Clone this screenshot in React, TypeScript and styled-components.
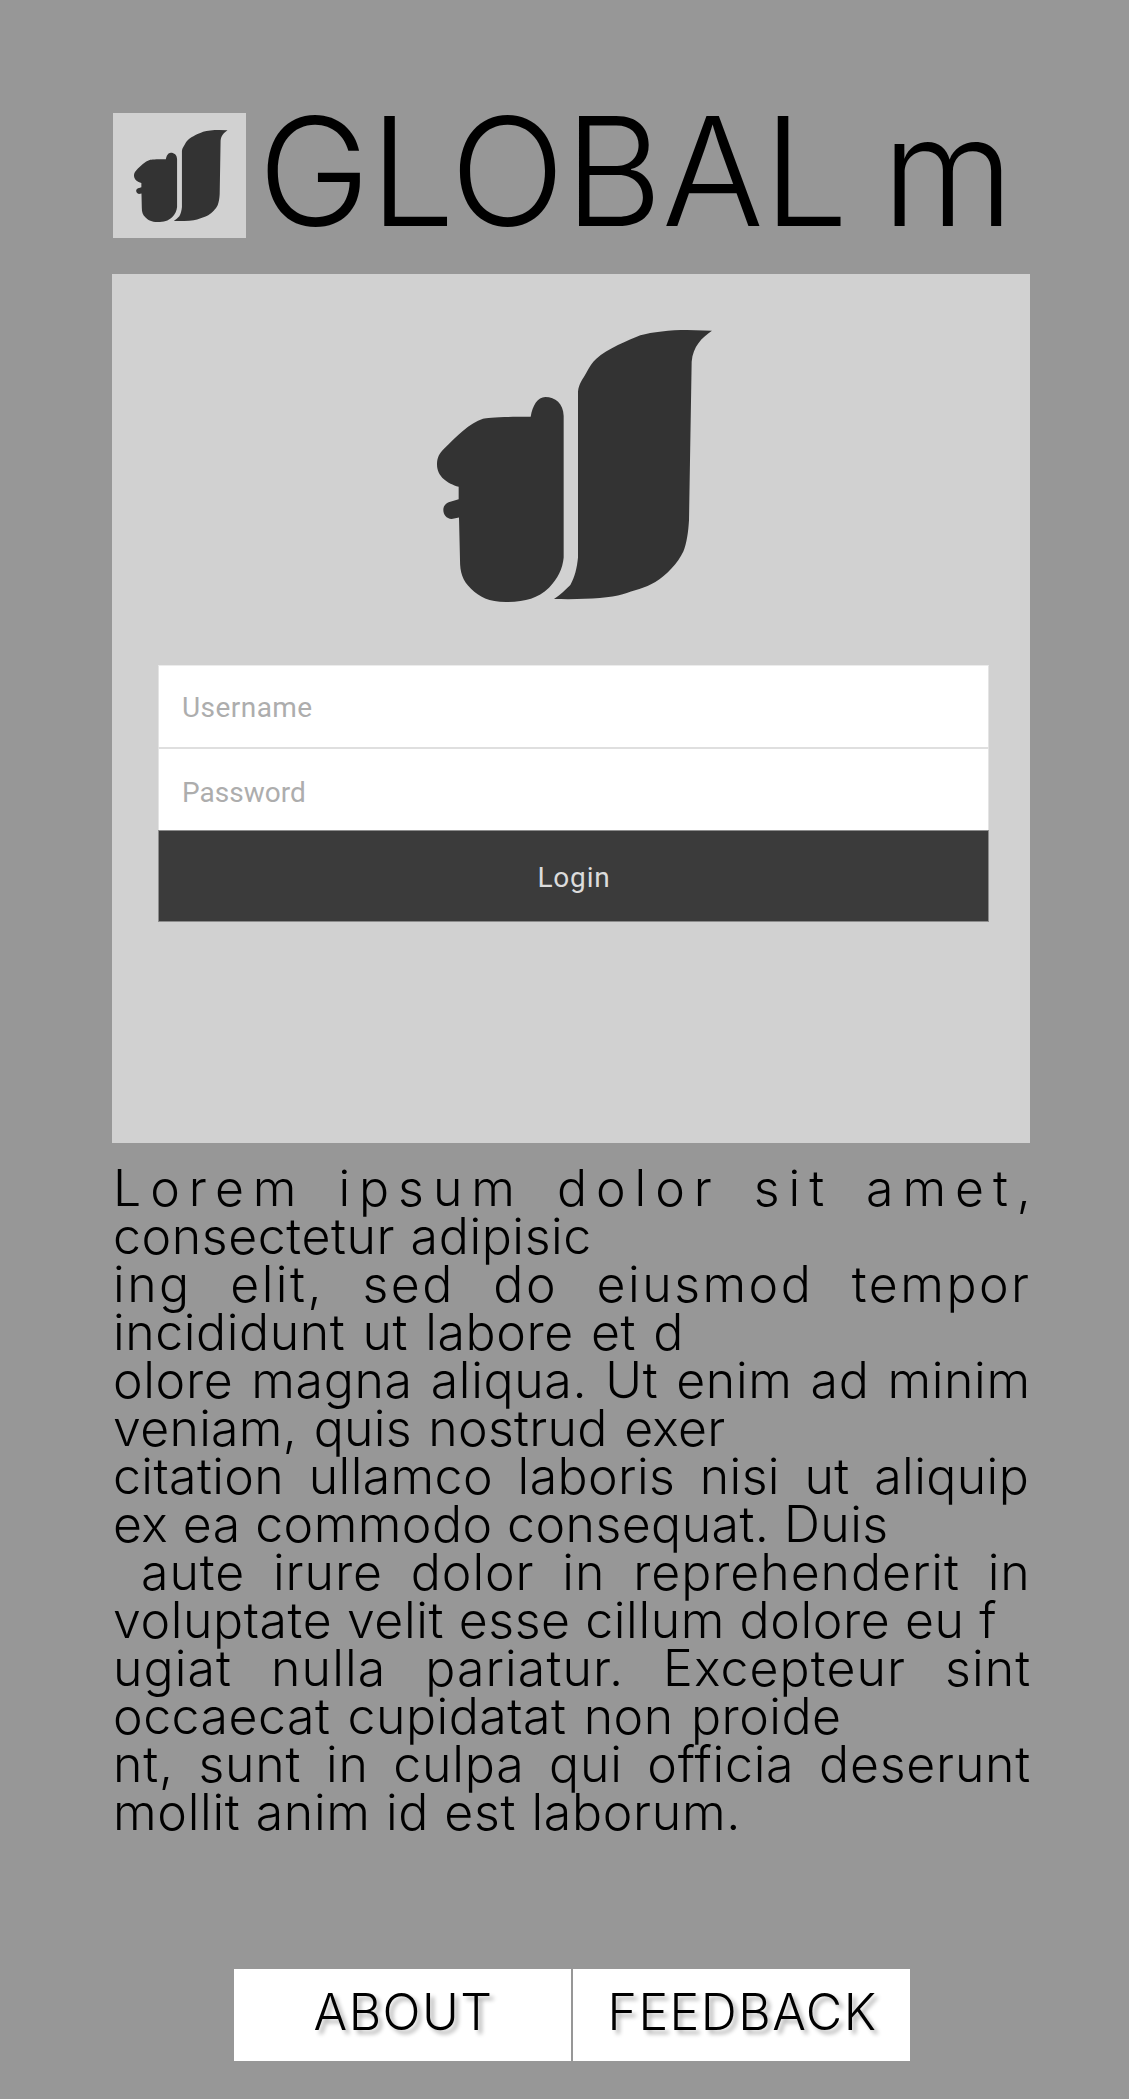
import React from 'react';
import styled, { createGlobalStyle } from 'styled-components';

const Global = createGlobalStyle`
  * { box-sizing: border-box; }
  body { margin: 0; background: #979797; }
`;

const Page = styled.main`
  width: 1129px;
  height: 2099px;
  padding: 113px 99px 0 112px;
  overflow: hidden;
  background: #979797;
  color: #000;
  font-family: Inter, "Liberation Sans", sans-serif;
  font-weight: 300;
`;

const Header = styled.header`
  display: flex;
  align-items: flex-start;
  height: 125px;
  padding-left: 1px;
`;

const LogoTile = styled.div`
  flex: none;
  width: 133px;
  height: 125px;
  padding: 17px 0 0 21px;
  background: #d1d1d1;
`;

const Mark = styled.svg<{ $width: number; $height: number }>`
  display: block;
  width: ${(p) => p.$width}px;
  height: ${(p) => p.$height}px;
  fill: #333;
`;

const Title = styled.h1`
  margin: 0 0 0 12px;
  font-size: 151px;
  font-weight: 300;
  line-height: 117px;
  letter-spacing: -0.45px;
  word-spacing: -8px;
  white-space: nowrap;
`;

const Card = styled.section`
  width: 918px;
  height: 869px;
  margin-top: 36px;
  padding: 56px 41px 0 46px;
  background: #d1d1d1;
`;

const CardMark = styled.div`
  height: 335px;
  padding-left: 278.5px;
`;

const Form = styled.div`
  display: flex;
  flex-direction: column;
  font-family: Roboto, "Liberation Sans", sans-serif;
  font-size: 28px;
  font-weight: 400;
`;

const Field = styled.div<{ $top: string; $spacing: number; $drop: number }>`
  height: ${(p) => (p.$top === '#ececec' ? 82 : 83)}px;
  padding: ${(p) => p.$drop}px 0 0 23px;
  border: solid #e4e4e4;
  border-width: 0 1px;
  border-top: ${(p) => (p.$top === '#ececec' ? 1 : 2)}px solid ${(p) => p.$top};
  background: #fff;
  color: #adadad;
  line-height: 81px;
  letter-spacing: ${(p) => p.$spacing}px;
`;

const LoginButton = styled.div`
  height: 92px;
  padding: 2px 0 0 1px;
  border: 1px solid #8c8c8c;
  background: #3b3b3b;
  color: #dcdcdc;
  line-height: 90px;
  letter-spacing: 0.8px;
  text-align: center;
`;

const Copy = styled.article`
  margin-top: 21px;
  padding-left: 1px;
  font-size: 50px;
  line-height: 48px;
`;

const Line = styled.div<{ $letter: number; $word: number; $indent?: number }>`
  height: 48px;
  padding-left: ${(p) => p.$indent ?? 0}px;
  letter-spacing: ${(p) => p.$letter}px;
  word-spacing: ${(p) => p.$word}px;
  white-space: nowrap;
`;

const Nav = styled.nav`
  display: flex;
  gap: 2px;
  margin: 133px 0 0 122px;
`;

const NavButton = styled.div`
  width: 337px;
  height: 92px;
  padding-left: 2px;
  background: #fff;
  font-size: 50px;
  line-height: 87px;
  letter-spacing: 1.45px;
  text-align: center;
  text-shadow: 4px 4px 4px rgba(0, 0, 0, 0.3);
`;

const lines: { text: string; letter: number; word: number; indent?: number }[] = [
  { text: 'Lorem ipsum dolor sit amet,', letter: 8.96, word: 10 },
  { text: 'consectetur adipisic', letter: 0.6, word: 0.8 },
  { text: 'ing elit, sed do eiusmod tempor', letter: 2.5, word: 21.9 },
  { text: 'incididunt ut labore et d', letter: 0.6, word: 2.5 },
  { text: 'olore magna aliqua. Ut enim ad minim', letter: 0.65, word: 3.3 },
  { text: 'veniam, quis nostrud exer', letter: 0.3, word: 2.1 },
  { text: 'citation ullamco laboris nisi ut aliquip', letter: 0.4, word: 10.1 },
  { text: 'ex ea commodo consequat. Duis', letter: 0.45, word: 0 },
  { text: 'aute irure dolor in reprehenderit in', letter: 0.95, word: 12.8, indent: 28 },
  { text: 'voluptate velit esse cillum dolore eu f', letter: 0.6, word: 0 },
  { text: 'ugiat nulla pariatur. Excepteur sint', letter: 1.1, word: 23.8 },
  { text: 'occaecat cupidatat non proide', letter: 0.5, word: 2.7 },
  { text: 'nt, sunt in culpa qui officia deserunt', letter: 0.8, word: 9.8 },
  { text: 'mollit anim id est laborum.', letter: 0.7, word: 0.5 },
];

function Squirrel({ width, height }: { width: number; height: number }) {
  return (
    <Mark $width={width} $height={height} viewBox="50 60 825 815" preserveAspectRatio="none" aria-hidden="true">
      <path d="M331 320 C337 285 352 262 375 261 C405 261 429 280 430 318 V742 C427 775 412 807 386 832 C350 865 315 874 257 875 C205 874 178 860 152 835 C126 811 119 785 119 750 L116 622 L94 626 C78 625 69 612 69 599 C69 584 81 576 95 573 L115 567 V530 C82 520 50 500 50 463 C50 443 57 430 71 416 C108 380 148 338 188 326 C200 322 240 320 331 320 Z" />
      <path d="M875 62 C844 83 818 109 814 155 L806 630 C804 665 799 700 789 724 C773 758 738 796 705 815 C675 833 640 840 607 852 C565 864 490 868 401 866 C420 854 436 838 450 824 C463 803 470 773 473 742 V245 C475 220 488 207 498 188 C508 169 516 157 528 146 C560 117 625 90 660 76 C695 66 750 60 800 60 Z" />
    </Mark>
  );
}

export default function App() {
  return (
    <>
      <Global />
      <Page>
        <Header>
          <LogoTile>
            <Squirrel width={93.5} height={92} />
          </LogoTile>
          <Title>GLOBAL m</Title>
        </Header>
        <Card>
          <CardMark>
            <Squirrel width={275} height={272} />
          </CardMark>
          <Form>
            <Field $top="#ececec" $spacing={0.45} $drop={1}>Username</Field>
            <Field $top="#dfdfdf" $spacing={0} $drop={3}>Password</Field>
            <LoginButton>Login</LoginButton>
          </Form>
        </Card>
        <Copy>
          {lines.map((l) => (
            <Line key={l.text} $letter={l.letter} $word={l.word} $indent={l.indent}>
              {l.text}
            </Line>
          ))}
        </Copy>
        <Nav>
          <NavButton>ABOUT</NavButton>
          <NavButton>FEEDBACK</NavButton>
        </Nav>
      </Page>
    </>
  );
}
